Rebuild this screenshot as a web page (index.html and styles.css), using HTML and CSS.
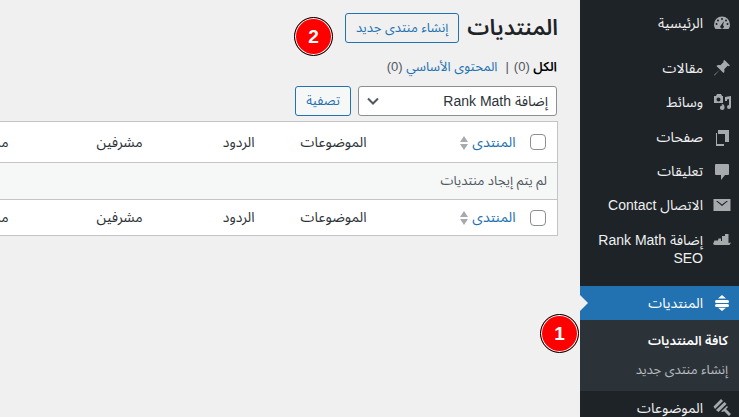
FILE: index.html
```html
<!DOCTYPE html>
<html lang="ar" dir="rtl">
<head>
    <meta charset="UTF-8">
    <title>المنتديات</title>
    <link rel="stylesheet" href="styles.css">
</head>
<body>
    <nav class="sidebar">
        <a class="menu-item"><svg class="icon" viewBox="0 0 20 20"><path fill-rule="evenodd" d="M10 3.500a8 8 0 0 0-8 8c0 1.800.5 3.300 1.500 4.500h13c1-1.200 1.500-2.700 1.500-4.500a8 8 0 0 0-8-8zM10 5a1 1 0 1 1 0 2 1 1 0 0 1 0-2zM6 6.500a1 1 0 1 1 0 2 1 1 0 0 1 0-2zm8 0a1 1 0 1 1 0 2 1 1 0 0 1 0-2zM4.500 10a1 1 0 1 1 0 2 1 1 0 0 1 0-2zm11 0a1 1 0 1 1 0 2 1 1 0 0 1 0-2zM12 8l-1 4.200a1.800 1.800 0 1 1-2 .1z"/></svg><span>الرئيسية</span></a>
        <div class="separator"></div>
        <a class="menu-item"><svg class="icon" viewBox="0 0 20 20"><path d="m12.500 2 5.500 5.500-1.500.8-.9-.5-3.400 3.400c.5 1.500.3 2.900-.7 3.900L8 11.600l-5.500 6-.5-.5 6-5.500L4.400 8c1-1 2.400-1.200 3.900-.7l3.400-3.400-.5-.9z"/></svg><span>مقالات</span></a>
        <a class="menu-item media-item"><svg class="icon" viewBox="0 0 20 20"><path fill-rule="evenodd" d="M2 4h2l1-2h4l1 2h1v7H2zm4.500 1.500a2 2 0 1 0 0 4 2 2 0 0 0 0-4zM13 5l6-1v11a2 2 0 1 1-2-2V7l-2 .4V9h-2zM9.500 12a3 3 0 0 1 3 3v1a2.300 2.300 0 1 1-2-2.500z"/></svg><span>وسائط</span></a>
        <a class="menu-item"><svg class="icon" viewBox="0 0 20 20"><path d="M6 3h11v12h-4V7H6zM4 6v13h8v-2H5V6z"/></svg><span>صفحات</span></a>
        <a class="menu-item"><svg class="icon" viewBox="0 0 20 20"><path d="M4 3h12a1 1 0 0 1 1 1v9a1 1 0 0 1-1 1h-3l-4 5v-5H4a1 1 0 0 1-1-1V4a1 1 0 0 1 1-1z"/></svg><span>تعليقات</span></a>
        <a class="menu-item"><svg class="icon" viewBox="0 0 20 20"><path fill-rule="evenodd" d="M1.500 4h17v12h-17zM4 6l6 5 6-5h-1.500L10 9.500 5.500 6z"/></svg><span>الاتصال Contact</span></a>
        <a class="menu-item tall"><svg class="icon" viewBox="0 0 20 20"><path d="M1 14l1.500-3.500H6l.5-2h2.500v2.500h1V6H13V4h3.500v9L19 12.500 17.500 15H2.500z"/></svg><span>إضافة Rank Math SEO</span></a>
        <div class="separator"></div>
        <a class="menu-item active"><svg class="icon" viewBox="0 0 20 20"><path d="M10 2l4 3.500H6zM4.500 7h11a1.500 1.500 0 0 1 0 3h-11a1.500 1.500 0 0 1 0-3zm0 4h11a1.500 1.500 0 0 1 0 3h-11a1.500 1.500 0 0 1 0-3zm1.500 3.800h8L10 18z"/></svg><span>المنتديات</span></a>
        <div class="submenu">
            <a class="current">كافة المنتديات</a>
            <a>إنشاء منتدى جديد</a>
        </div>
        <a class="menu-item"><svg class="icon" viewBox="0 0 20 20"><path d="M9 1l2 2-8 8-1.500-2.500zM12.500 4l2 2-8 8L4 12zM15 8l1 1-5 5-2-.5zM11 12l2-2 6 6-2 2z"/></svg><span>الموضوعات</span></a>
    </nav>

    <main class="content">
        <div class="page-head">
            <h1>المنتديات</h1>
            <a class="btn-outline">إنشاء منتدى جديد</a>
        </div>
        <ul class="filters">
            <li class="current">الكل <span>(0)</span></li>
            <li class="sep">|</li>
            <li><a>المحتوى الأساسي</a> <span>(0)</span></li>
        </ul>
        <div class="tablenav">
            <div class="select">
                <span>إضافة Rank Math</span>
                <svg width="12" height="8" viewBox="0 0 12 8"><path d="M1 1.500 6 6.500l5-5" fill="none" stroke="#50575e" stroke-width="2"/></svg>
            </div>
            <a class="btn-filter">تصفية</a>
        </div>
        <table class="list">
            <thead>
                <tr>
                    <th class="col-check"><span class="checkbox"></span></th>
                    <th class="col-forum"><a>المنتدى</a><span class="sort"><i class="up"></i><i class="down"></i></span></th>
                    <th class="col-num">الموضوعات</th>
                    <th class="col-num">الردود</th>
                    <th class="col-mods">مشرفين</th>
                    <th class="col-num">مشاركات</th>
                </tr>
            </thead>
            <tbody>
                <tr><td colspan="6">لم يتم إيجاد منتديات</td></tr>
            </tbody>
            <tfoot>
                <tr>
                    <th class="col-check"><span class="checkbox"></span></th>
                    <th class="col-forum"><a>المنتدى</a><span class="sort"><i class="up"></i><i class="down"></i></span></th>
                    <th class="col-num">الموضوعات</th>
                    <th class="col-num">الردود</th>
                    <th class="col-mods">مشرفين</th>
                    <th class="col-num">مشاركات</th>
                </tr>
            </tfoot>
        </table>
        <div class="badge badge-two">2</div>
    </main>
    <div class="badge badge-one">1</div>
</body>
</html>
```

FILE: styles.css
```css
* {
    box-sizing: border-box;
}
html, body {
    height: 417px;
}
body {
    margin: 0;
    display: flex;
    overflow: hidden;
    position: relative;
    background: #f0f0f0;
    color: #3c434a;
    font-family: "Liberation Sans", "Noto Sans Arabic", sans-serif;
    font-size: 13px;
}
a {
    color: #2271b1;
}

/* sidebar */
.sidebar {
    flex: 0 0 159px;
    height: 417px;
    padding-top: 6px;
    background: #1d2327;
    overflow: hidden;
}
.separator {
    height: 11px;
}
.menu-item {
    display: flex;
    align-items: flex-start;
    min-height: 34px;
    padding: 8px 7px 0 12px;
    color: #f0f0f1;
    font-size: 14px;
    line-height: 18px;
}
.menu-item .icon {
    flex: 0 0 20px;
    width: 20px;
    height: 20px;
    margin-top: -1px;
    margin-left: 9px;
    fill: #a7aaad;
}
.media-item {
    min-height: 35px;
}
.menu-item.tall {
    min-height: 53px;
    padding-top: 9px;
}
.menu-item.active {
    position: relative;
    background: #2271b1;
    color: #fff;
}
.menu-item.active .icon {
    fill: #fff;
}
.menu-item.active::after {
    content: "";
    position: absolute;
    left: 0;
    top: 9px;
    border: 8px solid transparent;
    border-right-width: 0;
    border-left-color: #f0f0f0;
}
.submenu {
    height: 71px;
    padding-top: 7px;
    background: #2c3338;
}
.submenu a {
    display: block;
    padding: 5px 11px 6px 8px;
    color: rgba(240, 246, 252, 0.7);
    line-height: 18px;
}
.submenu a.current {
    color: #fff;
    font-weight: 600;
}

/* main area */
.content {
    flex: 1;
    min-width: 0;
    position: relative;
    padding: 10px 22px 0 0;
    overflow: hidden;
}
.page-head {
    display: flex;
    align-items: center;
    gap: 8px;
    height: 36px;
}
h1 {
    margin: 0;
    color: #1d2327;
    font-size: 22px;
    font-weight: 600;
    line-height: 36px;
}
.btn-outline {
    height: 30px;
    padding: 0 10px;
    border: 1px solid #2271b1;
    border-radius: 3px;
    line-height: 28px;
    font-size: 13px;
    color: #2271b1;
}
.filters {
    display: flex;
    gap: 5px;
    margin: 10px 0 0;
    padding: 0 1px 0 0;
    list-style: none;
    line-height: 22px;
    color: #50575e;
}
.filters .current {
    color: #000;
    font-weight: 600;
}
.filters .current span {
    color: #50575e;
    font-weight: 400;
}
.filters .sep {
    margin-left: 3px;
    color: #50575e;
}
.tablenav {
    display: flex;
    gap: 7px;
    margin-top: 8px;
    padding-right: 1px;
    height: 30px;
}
.select {
    display: flex;
    align-items: center;
    justify-content: space-between;
    width: 199px;
    height: 30px;
    padding: 0 8px;
    background: #fff;
    border: 1px solid #8c8f94;
    border-radius: 3px;
    font-size: 14px;
    color: #2c3338;
}
.btn-filter {
    height: 30px;
    padding: 0 10px;
    background: #f6f7f7;
    border: 1px solid #2271b1;
    border-radius: 3px;
    line-height: 28px;
}

/* table */
.list {
    width: 653px;
    margin-top: 5px;
    table-layout: fixed;
    border-collapse: collapse;
    border: 1px solid #c3c4c7;
    background: #fff;
    color: #2c3338;
}
.list th {
    height: 36px;
    padding: 0 8px;
    text-align: right;
    font-weight: 400;
    font-size: 14px;
}
.list th.col-check {
    width: 34px;
}
.list th.col-forum {
    width: 149px;
}
.list th.col-num {
    width: 112px;
}
.list th.col-mods {
    width: 134px;
}
.list thead th {
    height: 41px;
    border-bottom: 1px solid #c3c4c7;
}
.list tfoot th {
    border-top: 1px solid #c3c4c7;
}
.list td {
    height: 37px;
    padding: 0 10px;
    background: #f6f7f7;
    color: #50575e;
    font-size: 13px;
}
.checkbox {
    display: block;
    width: 16px;
    height: 16px;
    margin-right: 3px;
    border: 1px solid #8c8f94;
    border-radius: 4px;
    background: #fff;
}
.sort {
    display: inline-block;
    vertical-align: middle;
    margin-right: 4px;
}
.sort i {
    display: block;
    width: 0;
    border: 4px solid transparent;
}
.sort .up {
    border-top: 0;
    border-bottom: 6px solid #a7aaad;
    margin-bottom: 2px;
}
.sort .down {
    border-bottom: 0;
    border-top: 6px solid #a7aaad;
}

/* numbered markers */
.badge {
    position: absolute;
    width: 39px;
    height: 39px;
    border-radius: 50%;
    background: #f00;
    border: 1px solid #000;
    box-shadow: inset 0 0 0 1px #fff;
    color: #fff;
    font-size: 19px;
    font-weight: 700;
    line-height: 37px;
    text-align: center;
}
.badge-one {
    left: 540px;
    top: 314px;
}
.badge-two {
    left: 294px;
    top: 17px;
}
```
